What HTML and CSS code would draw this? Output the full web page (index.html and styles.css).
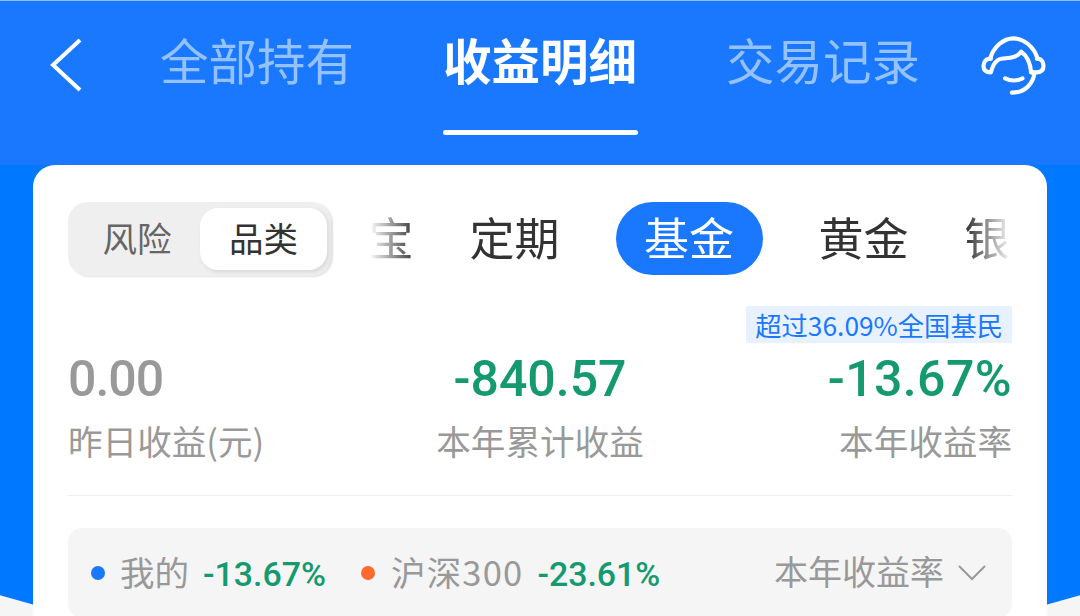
FILE: index.html
```html
<!DOCTYPE html>
<html lang="zh-CN">
<head>
<meta charset="utf-8">
<title>收益明细</title>
<link rel="stylesheet" href="styles.css">
</head>
<body>
<div class="page">
  <div class="wash"></div>
  <header class="header">
    <svg class="back" viewBox="0 0 32 54" aria-hidden="true"><path d="M30 1 L3 26 L30 51" /></svg>
    <nav class="tabs">
      <a class="tab">全部持有</a>
      <a class="tab tab-active">收益明细</a>
      <a class="tab">交易记录</a>
    </nav>
    <svg class="service" viewBox="60 45 200 180" aria-hidden="true">
      <path d="M90 116 C100 80 130 55 160 55 C190 55 222 80 232 116" />
      <path d="M92 116 C77 116 70 126 70 138 C70 150 78 157 92 157 C96 142 102 128 112 121 C124 112 142 117 160 111 C170 108 178 102 183 95 C198 106 210 124 213 157" />
      <path d="M230 116 C244 116 250 126 250 138 C250 150 243 157 228 157 L213 157" />
      <path d="M135 175 Q160 188 187 175" />
      <path d="M223 158 C220 190 195 218 155 218" />
    </svg>
  </header>
  <main class="card">
    <div class="filters">
      <div class="segment">
        <span class="seg-item">风险</span>
        <span class="seg-item seg-on">品类</span>
      </div>
      <div class="chips">
        <span class="chip">宝</span>
        <span class="chip">定期</span>
        <span class="chip chip-on">基金</span>
        <span class="chip">黄金</span>
        <span class="chip">银</span>
      </div>
    </div>
    <section class="stats">
      <div class="stat stat-left">
        <div class="value value-muted">0.00</div>
        <div class="label">昨日收益(元)</div>
      </div>
      <div class="stat stat-mid">
        <div class="value">-840.57</div>
        <div class="label">本年累计收益</div>
      </div>
      <div class="stat stat-right">
        <div class="badge">超过36.09%全国基民</div>
        <div class="value">-13.67%</div>
        <div class="label">本年收益率</div>
      </div>
    </section>
    <section class="compare">
      <div class="legend">
        <i class="dot dot-blue"></i><span class="name">我的</span><b class="rate">-13.67%</b>
      </div>
      <div class="legend legend-second">
        <i class="dot dot-orange"></i><span class="name name-index">沪深300</span><b class="rate">-23.61%</b>
      </div>
      <div class="picker">
        <span class="name">本年收益率</span>
        <svg class="caret" viewBox="0 0 28 16" aria-hidden="true"><path d="M1 1 L14 14 L27 1" /></svg>
      </div>
    </section>
  </main>
</div>
</body>
</html>
```
FILE: styles.css
```css
* { box-sizing: border-box; }
html, body { margin: 0; padding: 0; }
body {
  font-family: "Noto Sans CJK SC", "Noto Sans", sans-serif;
  background: #f5f5f5;
  color: #333;
}
.page {
  position: relative;
  width: 1080px;
  height: 616px;
  overflow: hidden;
  background: #f5f5f5;
}
.wash {
  position: absolute;
  left: -460px;
  top: -250px;
  width: 2000px;
  height: 918px;
  border-radius: 50%;
  background: #0078ff;
}
.header {
  position: relative;
  display: flex;
  align-items: flex-start;
  height: 165px;
  padding: 38px 0 0 50px;
  background: #1a78ff;
  border-top: 1px solid #8fbcff;
}
.back {
  width: 32px;
  height: 54px;
  fill: none;
  stroke: #fff;
  stroke-width: 4;
}
.tabs {
  display: flex;
  gap: 91px;
  margin-left: 79px;
  margin-top: -4px;
}
.tab {
  display: flex;
  flex-direction: column;
  align-items: center;
  width: 192px;
  font-size: 48.5px;
  line-height: 49px;
  white-space: nowrap;
  color: #94c1ff;
}
.tab-active {
  font-weight: 700;
  color: #fff;
}
.tab-active::after {
  content: "";
  flex: none;
  width: 195px;
  height: 5px;
  margin-top: 46px;
  border-radius: 3px;
  background: #fff;
}
.service {
  width: 67px;
  height: 60px;
  margin: -4px 0 0 61px;
  fill: none;
  stroke: #fff;
  stroke-width: 12.5;
  stroke-linecap: round;
  stroke-linejoin: round;
}
.card {
  position: relative;
  width: 1014px;
  height: 500px;
  margin-left: 33px;
  padding: 37px 35px 0 35px;
  border-radius: 22px 22px 0 0;
  background: #fff;
}
.filters {
  display: flex;
  align-items: stretch;
  height: 74px;
}
.segment {
  display: flex;
  align-items: stretch;
  width: 263px;
  padding: 6px 4px 6px 6px;
  border-radius: 20px;
  background: #efefef;
  box-shadow: 2px 1px 2px #e2e2e2;
}
.seg-item {
  display: flex;
  align-items: center;
  justify-content: center;
  flex: 1;
  padding-bottom: 4px;
  font-size: 34.5px;
  color: #666;
}
.seg-on {
  flex: none;
  width: 127px;
  border-radius: 18px;
  background: #fff;
  color: #333;
  box-shadow: 2px 2px 4px #d8d8d8;
}
.chips {
  display: flex;
  flex: 1;
  align-items: flex-start;
  gap: 56px;
  margin-left: 37.5px;
  overflow: hidden;
  -webkit-mask-image: linear-gradient(90deg, transparent 0, #000 46px, #000 calc(100% - 46px), transparent 100%);
  mask-image: linear-gradient(90deg, transparent 0, #000 46px, #000 calc(100% - 46px), transparent 100%);
}
.chip {
  flex: none;
  padding-bottom: 4px;
  font-size: 45px;
  line-height: 69px;
  color: #333;
}
.chip-on {
  padding: 0 28.5px 4px;
  border-radius: 37px;
  background: #1a78ff;
  color: #fff;
}
.stats {
  display: grid;
  grid-template-columns: 1fr 1fr 1fr;
  align-items: start;
  height: 220px;
  padding: 30px 0 0;
  border-bottom: 1px solid #eee;
}
.stat {
  display: flex;
  flex-direction: column;
}
.stat-left, .stat-mid { padding-top: 43px; }
.stat-mid { align-items: center; }
.stat-right { align-items: flex-end; }
.value {
  height: 60px;
  margin-bottom: 9px;
  font-family: Roboto, sans-serif;
  font-size: 50px;
  line-height: 60px;
  font-weight: 500;
  color: #149a6e;
}
.stat-right .value { letter-spacing: 0.4px; }
.value-muted {
  letter-spacing: -1px;
  color: #999;
}
.label {
  height: 44px;
  font-size: 34.6px;
  line-height: 44px;
  white-space: nowrap;
  color: #999;
}
.badge {
  height: 37px;
  margin-bottom: 6px;
  padding: 0 9px;
  font-size: 26.3px;
  line-height: 37px;
  white-space: nowrap;
  color: #1a78ff;
  background: #e8f1ff;
}
.compare {
  display: flex;
  align-items: center;
  height: 90px;
  margin-top: 32px;
  padding: 0 26px 0 23px;
  border-radius: 14px;
  background: #f5f5f5;
}
.legend {
  display: flex;
  align-items: center;
}
.legend-second { margin-left: 35px; }
.dot {
  width: 14px;
  height: 14px;
  border-radius: 50%;
}
.dot-blue { background: #1a78ff; }
.dot-orange { background: #ff6b2e; }
.name {
  margin-left: 15px;
  padding-bottom: 5px;
  font-size: 34.5px;
  white-space: nowrap;
  color: #999;
}
.name-index {
  margin-left: 16px;
  letter-spacing: 1.2px;
}
.rate {
  margin-left: 14px;
  padding-top: 3px;
  font-family: Roboto, sans-serif;
  font-size: 33.9px;
  font-weight: 500;
  white-space: nowrap;
  color: #149a6e;
}
.picker {
  display: flex;
  align-items: center;
  margin-left: auto;
}
.picker .name {
  margin: 0;
  font-size: 34px;
}
.caret {
  width: 28px;
  height: 16px;
  margin-left: 14px;
  fill: none;
  stroke: #999;
  stroke-width: 2;
}
```
